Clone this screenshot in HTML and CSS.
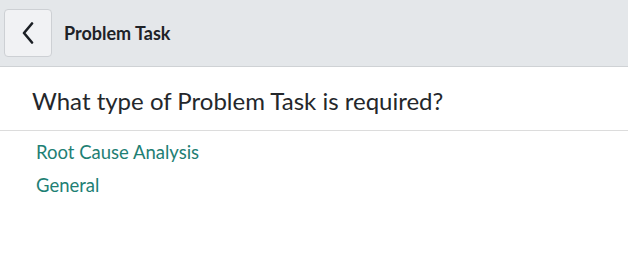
FILE: index.html
```html
<!DOCTYPE html>
<html>
<head>
<meta charset="utf-8">
<link rel="stylesheet" href="styles.css">
</head>
<body>
<header class="topbar">
  <button class="back" aria-label="Back">
    <svg width="12" height="22" viewBox="0 0 12 22"><path d="M10 1.5 L2 11 L10 20.5" fill="none" stroke="#1b1f24" stroke-width="2.6" stroke-linecap="round" stroke-linejoin="round"/></svg>
  </button>
  <h1 class="title">Problem Task</h1>
</header>
<main>
  <h2 class="question">What type of Problem Task is required?</h2>
  <ul class="options">
    <li><a href="#">Root Cause Analysis</a></li>
    <li><a href="#">General</a></li>
  </ul>
</main>
</body>
</html>
```
FILE: styles.css
```css
* { box-sizing: border-box; }
body {
  margin: 0;
  font-family: "Lato", "Noto Sans", sans-serif;
  background: #fff;
  color: #2b2e33;
}
.topbar {
  height: 67px;
  background: #e4e7ea;
  border-bottom: 1px solid #cfd2d5;
  display: flex;
  align-items: center;
  padding-left: 4px;
  gap: 12px;
}
.back {
  width: 48px;
  height: 48px;
  background: #f1f2f4;
  border: 1px solid #cdd0d4;
  border-radius: 4px;
  display: flex;
  align-items: center;
  justify-content: center;
  padding: 0;
}
.title {
  margin: 0;
  font-size: 18px;
  font-weight: 700;
  color: #1e2227;
}
.question {
  margin: 0;
  padding: 19px 32px 0;
  height: 64px;
  font-size: 24px;
  font-weight: 400;
  color: #24272b;
  border-bottom: 1px solid #dcdcdc;
}
.options {
  list-style: none;
  margin: 0;
  padding: 4px 36px;
}
.options li {
  height: 33px;
  display: flex;
  align-items: center;
}
.options a {
  color: #1e8074;
  text-decoration: none;
  font-size: 18.5px;
}
```
